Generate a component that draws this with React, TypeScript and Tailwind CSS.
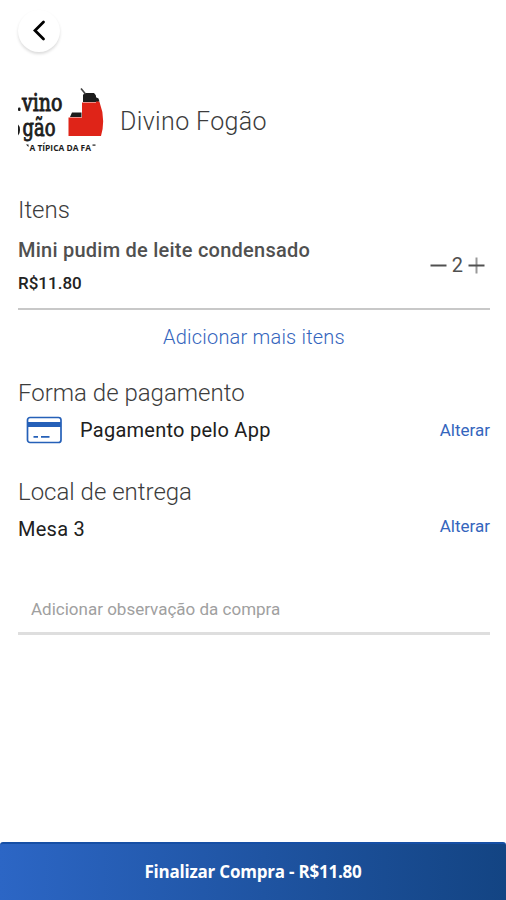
function Logo() {
  return (
    <svg width="88" height="70" viewBox="16 84 88 70" className="block shrink-0" role="img" aria-label="Divino Fogão">
      <g fill="#1c1c1c" fontWeight="700">
        <g fontFamily="'DejaVu Serif', serif">
          <rect x="18" y="107.500" width="2.500" height="3.500" rx="1" />
          <text x="22" y="111" fontSize="23.500" fontWeight="400" stroke="#1c1c1c" strokeWidth="0.900" textLength="40.500" lengthAdjust="spacingAndGlyphs">vino</text>
          <path d="M18 124.500Q20 126 20 130T18 135.500Z" />
          <text x="22.500" y="136" fontSize="23.500" fontWeight="400" stroke="#1c1c1c" strokeWidth="0.900" textLength="33" lengthAdjust="spacingAndGlyphs">gão</text>
        </g>
        <path d="M26 144.500H28.500L28.500 147Z" />
        <text x="29.500" y="150.500" fontSize="8.500" fontFamily="'Open Sans', sans-serif" textLength="61.500" lengthAdjust="spacingAndGlyphs">A TÍPICA DA FA</text>
        <rect x="92.500" y="144.500" width="3" height="1.200" />
      </g>
      <path d="M68.500 117.500H82V102.500H96V100L99.500 102Q106 119 101 136H68.500Z" fill="#df2418" />
      <path d="M70 117L72 112.500H81.500V117Z" fill="#1c1c1c" />
      <path d="M83 102V95L84.500 93H94L96 95.500V102Z" fill="#1c1c1c" />
      <path d="M95.500 97L98.500 98.500L99.500 101.500H95.500Z" fill="#1c1c1c" />
      <path d="M81 88.500L85.500 94" stroke="#444" strokeWidth="1.600" fill="none" />
    </svg>
  );
}

function Card() {
  return (
    <svg width="36" height="28" viewBox="0 0 36 28" className="block shrink-0" fill="none" stroke="#2560b8">
      <rect x="1.500" y="1.500" width="33.500" height="25" rx="2.500" strokeWidth="1.700" />
      <rect x="1.500" y="6" width="33.500" height="5" fill="#2560b8" stroke="none" />
      <path d="M7.500 20.800H12M15 20.800H23.500" strokeWidth="1.800" />
    </svg>
  );
}

function Heading({ children }: { children: string }) {
  return <h2 className="h-7 text-[24px] leading-7 font-light whitespace-nowrap text-[#3c3c3c]">{children}</h2>;
}

export default function App() {
  return (
    <div className="flex h-[900px] w-[506px] flex-col overflow-hidden bg-white font-[Roboto,sans-serif]">
      <header className="flex h-[84px] shrink-0 px-[18px] pt-[10px]">
        <button className="flex size-[42px] items-center justify-center rounded-full bg-white shadow-[0_2px_3px_rgba(0,0,0,0.14)]" aria-label="Voltar">
          <svg width="14" height="22" viewBox="0 0 14 22" fill="none" stroke="#000" strokeWidth="2.800">
            <path d="M11.500 2L3 10.500L11.500 19" strokeLinecap="round" />
          </svg>
        </button>
      </header>

      <main className="flex flex-1 flex-col pr-4 pl-[18px]">
        <div className="-ml-0.5 flex h-[70px] shrink-0">
          <Logo />
          <h1 className="mt-[24px] ml-4 text-[25px] leading-7 font-light tracking-[0.36px] whitespace-nowrap text-[#3c3c3c]">Divino Fogão</h1>
        </div>

        <section className="mt-[42px] shrink-0">
          <Heading>Itens</Heading>
          <div className="flex h-[86px] justify-between border-b-2 border-[#c8c8c8]">
            <div className="pt-[14px]">
              <p className="text-[20px] leading-6 font-medium tracking-[0.24px] whitespace-nowrap text-[#505050]">Mini pudim de leite condensado</p>
              <p className="mt-[11px] text-[17px] leading-5 font-medium text-[#222]">R$11.80</p>
            </div>
            <div className="mt-[29px] mr-[5px] flex h-6 items-center text-[#505050]">
              <svg width="17" height="17" viewBox="0 0 17 17" stroke="currentColor" strokeWidth="2"><path d="M0.500 8.500H16.500" /></svg>
              <span className="mx-[5px] text-[20px] leading-6">2</span>
              <svg width="17" height="17" viewBox="0 0 17 17" stroke="currentColor" strokeWidth="2"><path d="M8.500 0.500V16.500" stroke="#999" /><path d="M0.500 8.500H16.500" /></svg>
            </div>
          </div>
          <button className="mt-[15px] block w-full text-[20px] leading-6 font-light tracking-[0.2px] text-[#3465bd]">Adicionar mais itens</button>
        </section>

        <section className="mt-[30px] shrink-0">
          <Heading>Forma de pagamento</Heading>
          <div className="flex h-11 pt-[9px]">
            <div className="ml-2"><Card /></div>
            <p className="mt-px ml-[18px] text-[20px] leading-[26px] tracking-[0.26px] text-[#202020]">Pagamento pelo App</p>
            <button className="mt-px ml-auto h-[26px] text-[17px] leading-[26px] text-[#3465bd]">Alterar</button>
          </div>
        </section>

        <section className="mt-[27px] shrink-0">
          <Heading>Local de entrega</Heading>
          <div className="flex h-11 justify-between pt-[9px]">
            <p className="mt-px text-[20px] leading-[26px] tracking-[0.26px] text-[#202020]">Mesa 3</p>
            <button className="-mt-0.5 h-[26px] text-[17px] leading-[26px] text-[#3465bd]">Alterar</button>
          </div>
        </section>

        <div className="mt-[48px] h-[37px] shrink-0 border-b-3 border-[#dedede] pl-[13px] text-[17px] leading-[23px] text-[#a0a0a0]">Adicionar observação da compra</div>
      </main>

      <button className="h-[58px] w-full shrink-0 rounded-t-[3px] border-t-2 border-[#164fa5] bg-linear-to-r from-[#2c66c5] to-[#134483] font-['Open_Sans',sans-serif] text-[17px] font-bold tracking-[-0.22px] text-white">
        Finalizar Compra - R$11.80
      </button>
    </div>
  );
}
